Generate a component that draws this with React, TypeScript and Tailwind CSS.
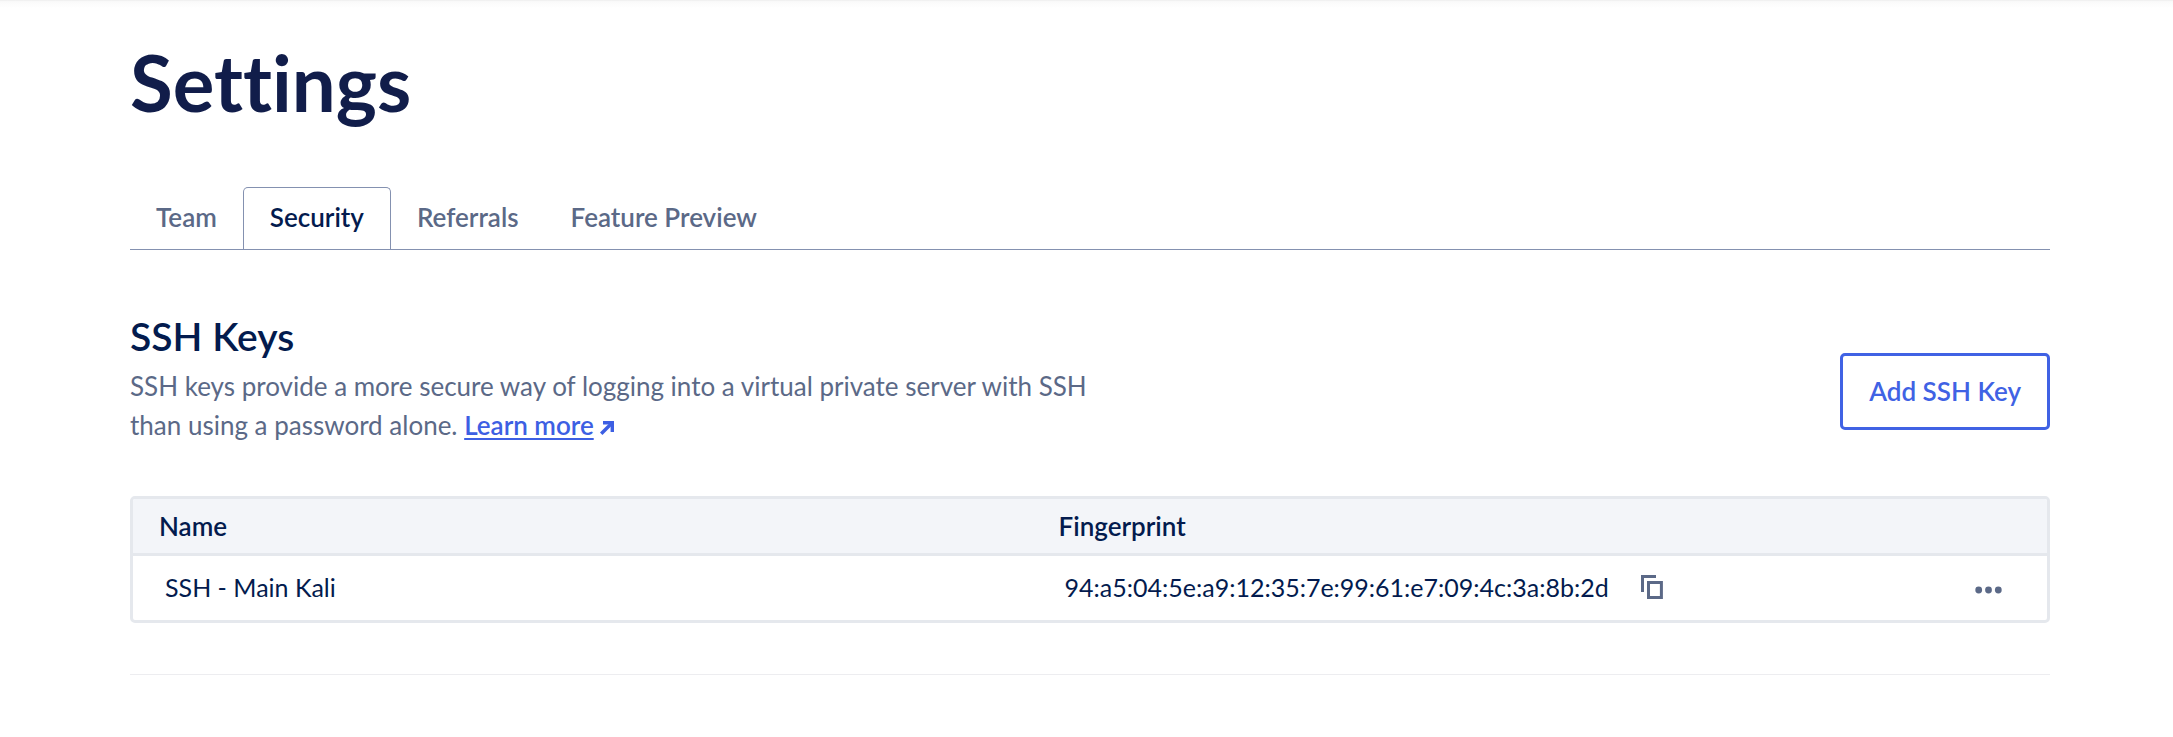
const tabs = ["Team", "Security", "Referrals", "Feature Preview"];

const keys = [
  { name: "SSH - Main Kali", fingerprint: "94:a5:04:5e:a9:12:35:7e:99:61:e7:09:4c:3a:8b:2d" },
];

function ArrowIcon() {
  return (
    <svg width="14" height="14" viewBox="0 0 14 14" fill="none" stroke="currentColor" strokeWidth="3.4" className="ml-1.5 inline-block" aria-hidden="true">
      <path d="M3 1.7H12.3V11" />
      <path d="M12 2L1.2 12.8" />
    </svg>
  );
}

function CopyIcon() {
  return (
    <svg width="22" height="24" viewBox="0 0 22 24" fill="none" stroke="currentColor" strokeWidth="3" aria-hidden="true">
      <path d="M1.5 17V1.5H15" />
      <path d="M7.5 7.5H20.4V22.4H7.5Z" />
    </svg>
  );
}

function MoreIcon() {
  return (
    <svg width="27" height="8" viewBox="0 0 27 8" fill="currentColor" aria-hidden="true">
      <circle cx="3.7" cy="4" r="3.4" />
      <circle cx="13.5" cy="4" r="3.4" />
      <circle cx="23.3" cy="4" r="3.4" />
    </svg>
  );
}

export default function App() {
  return (
    <div className="bg-white font-['Lato',sans-serif] text-[26px] text-[#031b4e]">
      <div className="h-2 bg-linear-to-b from-[#ededed] via-[#fafafa] via-20% to-white" />
      <main className="pt-7 pr-[123px] pb-16 pl-[130px]">
        <h1 className="text-[78px] leading-[92px] font-bold text-[#111d4a] [font-variant-ligatures:none]">Settings</h1>

        <nav aria-label="Settings sections" className="mt-[59px] flex border-b border-[#8491b0]">
          {tabs.map((tab) => {
            const active = tab === "Security";
            return (
              <a
                key={tab}
                href={`#${tab.toLowerCase().replace(" ", "-")}`}
                aria-current={active ? "page" : undefined}
                className={
                  active
                    ? "rounded-t-[5px] border border-b-0 border-[#8491b0] px-[26px] pt-[11px] pb-3.5 leading-9 font-semibold"
                    : "px-[26px] pt-3 pb-3 leading-9 font-semibold text-[#5b6987]"
                }
              >
                {tab}
              </a>
            );
          })}
        </nav>

        <section>
          <div className="mt-[58px] flex items-center justify-between">
            <div>
              <h2 className="text-[39px] leading-[56px] font-semibold">SSH Keys</h2>
              <p className="mt-[3px] leading-[39px] text-[#5b6987]">
                SSH keys provide a more secure way of logging into a virtual private server with SSH
                <br />
                than using a password alone.{" "}
                <a href="#learn-more" className="font-semibold whitespace-nowrap text-[#3d5fe3]">
                  <span className="underline decoration-2 underline-offset-3">Learn more</span>
                  <ArrowIcon />
                </a>
              </p>
            </div>
            <button type="button" className="mt-[30px] rounded-[5px] border-3 border-[#4062e4] px-[26px] py-[17px] leading-[37px] font-semibold text-[#4062e4]">
              Add SSH Key
            </button>
          </div>

          <div className="mt-[51px] overflow-hidden rounded-[5px] border-3 border-[#e5e8ed]">
            <table className="w-full table-fixed border-separate border-spacing-0 text-left">
              <thead className="bg-[#f3f5f9]">
                <tr>
                  <th scope="col" className="w-[47%] border-b-3 border-[#e5e8ed] px-[26px] py-2 leading-[38px] font-semibold">Name</th>
                  <th scope="col" className="border-b-3 border-[#e5e8ed] px-[26px] py-2 leading-[38px] font-semibold">Fingerprint</th>
                  <td className="w-40 border-b-3 border-[#e5e8ed]" />
                </tr>
              </thead>
              <tbody>
                {keys.map((key) => (
                  <tr key={key.fingerprint} className="text-[25px]">
                    <td className="px-8 pt-[11px] pb-[13px] leading-10">{key.name}</td>
                    <td className="px-8 pt-[11px] pb-[13px] leading-10">
                      <div className="flex items-center gap-8">
                        <span>{key.fingerprint}</span>
                        <button type="button" aria-label="Copy fingerprint" className="text-[#5b6987]"><CopyIcon /></button>
                      </div>
                    </td>
                    <td className="pt-[15px] pr-[45px] pb-[11px]">
                      <div className="flex justify-end">
                        <button type="button" aria-label="More actions" className="text-[#5b6987]"><MoreIcon /></button>
                      </div>
                    </td>
                  </tr>
                ))}
              </tbody>
            </table>
          </div>
        </section>
        <hr className="mt-[51px] border-[#ededf0]" />
      </main>
    </div>
  );
}
